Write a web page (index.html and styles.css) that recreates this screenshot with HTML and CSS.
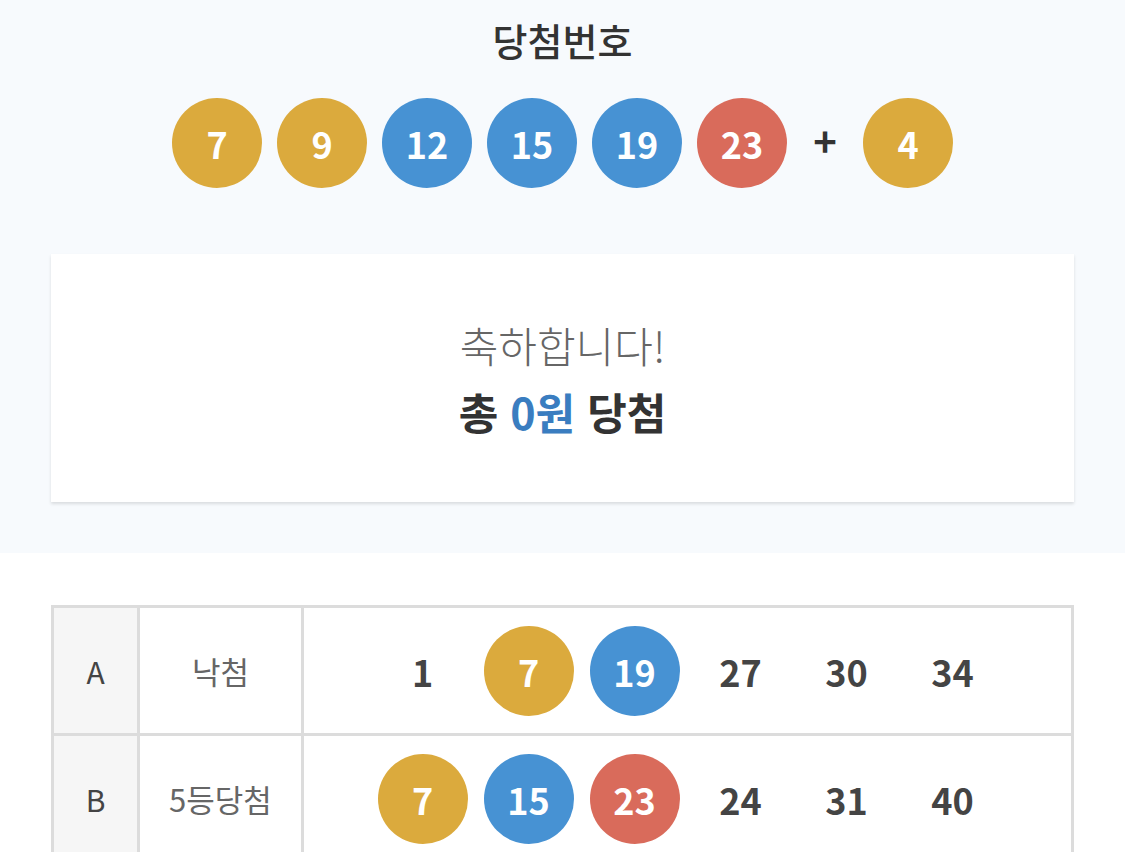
FILE: index.html
```html
<!DOCTYPE html>
<html lang="ko">
<head>
<meta charset="utf-8">
<title>당첨번호</title>
<link rel="stylesheet" href="styles.css">
</head>
<body>
<section class="top">
  <h1 class="title">당첨번호</h1>
  <div class="balls">
    <span class="ball yellow">7</span>
    <span class="ball yellow">9</span>
    <span class="ball blue">12</span>
    <span class="ball blue">15</span>
    <span class="ball blue">19</span>
    <span class="ball red">23</span>
    <span class="plus">+</span>
    <span class="ball yellow">4</span>
  </div>
  <div class="card">
    <p class="congrats">축하합니다!</p>
    <p class="total">총 <span class="amount">0원</span> 당첨</p>
  </div>
</section>
<section class="results">
  <table class="result-table">
    <tr>
      <td class="col-label">A</td>
      <td class="col-rank">낙첨</td>
      <td class="col-nums">
        <div class="nums">
          <span class="num">1</span>
          <span class="num ball yellow">7</span>
          <span class="num ball blue">19</span>
          <span class="num">27</span>
          <span class="num">30</span>
          <span class="num">34</span>
        </div>
      </td>
    </tr>
    <tr>
      <td class="col-label">B</td>
      <td class="col-rank">5등당첨</td>
      <td class="col-nums">
        <div class="nums">
          <span class="num ball yellow">7</span>
          <span class="num ball blue">15</span>
          <span class="num ball red">23</span>
          <span class="num">24</span>
          <span class="num">31</span>
          <span class="num">40</span>
        </div>
      </td>
    </tr>
  </table>
</section>
</body>
</html>
```
FILE: styles.css
```css
* { box-sizing: border-box; }
html, body {
  margin: 0;
  padding: 0;
  background: #fff;
  font-family: "Noto Sans CJK KR", "Noto Sans", sans-serif;
  color: #333;
}
.top {
  background: #f7fafd;
  padding: 14px 51px 51px;
  display: flex;
  flex-direction: column;
  align-items: center;
}
.title {
  margin: 0;
  font-size: 38px;
  font-weight: 500;
  line-height: 52px;
  color: #333;
}
.balls {
  display: flex;
  align-items: center;
  gap: 15px;
  margin-top: 32px;
}
.ball {
  width: 90px;
  height: 90px;
  border-radius: 50%;
  display: flex;
  align-items: center;
  justify-content: center;
  color: #fff;
  font-size: 36px;
  font-weight: 700;
  line-height: 1;
}
.yellow { background: #dbaa3d; }
.blue { background: #4792d3; }
.red { background: #d96b5b; }
.plus {
  width: 46px;
  text-align: center;
  font-size: 40px;
  font-weight: 700;
  color: #333;
  line-height: 1;
  margin-top: -6px;
}
.card {
  margin-top: 66px;
  width: 100%;
  height: 248px;
  background: #fff;
  box-shadow: 0 2px 3px rgba(0,0,0,0.12);
  display: flex;
  flex-direction: column;
  align-items: center;
  justify-content: center;
  gap: 14px;
}
.card p { margin: 0; }
.congrats {
  font-size: 42px;
  font-weight: 300;
  color: #666;
  line-height: 52px;
}
.total {
  font-size: 43px;
  font-weight: 700;
  color: #333;
  line-height: 52px;
}
.amount { color: #3a7dc0; }
.results {
  padding: 52px 51px 0;
}
.result-table {
  width: 100%;
  border-collapse: collapse;
  border: 3px solid #dcdcdc;
}
.result-table td {
  border: 3px solid #dcdcdc;
  height: 128px;
  padding: 0;
  text-align: center;
  vertical-align: middle;
}
.col-label {
  width: 86px;
  background: #f6f6f6;
  font-size: 30px;
  color: #444;
}
.col-rank {
  width: 164px;
  font-size: 31px;
  color: #666;
}
.nums {
  display: flex;
  justify-content: center;
  gap: 16px;
}
.num {
  width: 90px;
  height: 90px;
  display: flex;
  align-items: center;
  justify-content: center;
  font-size: 36px;
  font-weight: 700;
  color: #444;
  line-height: 1;
}
.num.ball { color: #fff; }
```
